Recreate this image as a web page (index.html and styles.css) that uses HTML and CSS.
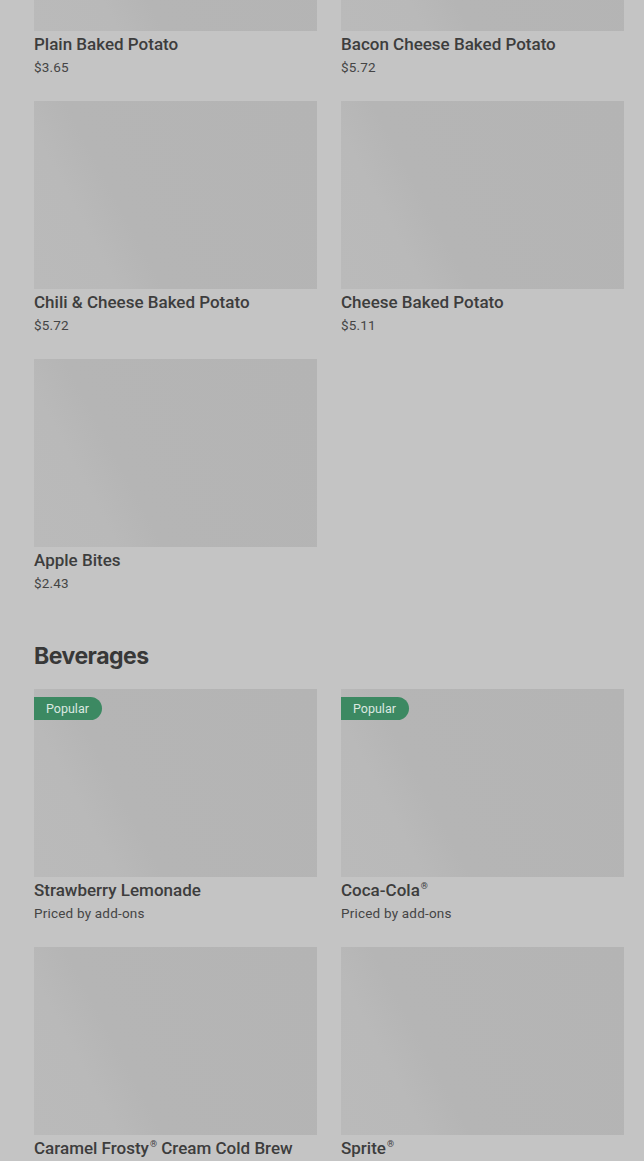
FILE: index.html
```html
<!DOCTYPE html>
<html lang="en">
<head>
    <meta charset="UTF-8">
    <meta name="viewport" content="width=device-width, initial-scale=1.0">
    <title>Menu</title>
    <link rel="stylesheet" href="styles.css">
</head>
<body>
    <div class="menu">
        <section class="category first">
            <div class="grid">
                <div class="item">
                    <div class="thumb"></div>
                    <div class="name">Plain Baked Potato</div>
                    <div class="price">$3.65</div>
                </div>
                <div class="item">
                    <div class="thumb"></div>
                    <div class="name">Bacon Cheese Baked Potato</div>
                    <div class="price">$5.72</div>
                </div>
                <div class="item">
                    <div class="thumb"></div>
                    <div class="name">Chili &amp; Cheese Baked Potato</div>
                    <div class="price">$5.72</div>
                </div>
                <div class="item">
                    <div class="thumb"></div>
                    <div class="name">Cheese Baked Potato</div>
                    <div class="price">$5.11</div>
                </div>
                <div class="item">
                    <div class="thumb"></div>
                    <div class="name">Apple Bites</div>
                    <div class="price">$2.43</div>
                </div>
            </div>
        </section>

        <section class="category">
            <h2>Beverages</h2>
            <div class="grid">
                <div class="item">
                    <div class="thumb"><span class="badge">Popular</span></div>
                    <div class="name">Strawberry Lemonade</div>
                    <div class="price">Priced by add-ons</div>
                </div>
                <div class="item">
                    <div class="thumb"><span class="badge">Popular</span></div>
                    <div class="name">Coca-Cola<sup class="reg">&reg;</sup></div>
                    <div class="price">Priced by add-ons</div>
                </div>
                <div class="item">
                    <div class="thumb"></div>
                    <div class="name">Caramel Frosty<sup class="reg">&reg;</sup> Cream Cold Brew</div>
                </div>
                <div class="item">
                    <div class="thumb"></div>
                    <div class="name">Sprite<sup class="reg">&reg;</sup></div>
                </div>
            </div>
        </section>
    </div>
</body>
</html>
```

FILE: styles.css
```css
html, body {
    margin: 0;
    height: 1161px;
    overflow: hidden;
}
body {
    font-family: Roboto, "Liberation Sans", sans-serif;
    background-color: #c4c4c4;
    color: #3a3a3a;
}
.menu {
    padding: 0 20px 0 34px;
}
.category.first {
    margin-top: -157px;
}
.category h2 {
    margin: 49px 0 19px;
    font-family: Inter, Roboto, sans-serif;
    font-size: 23px;
    line-height: 28px;
    font-weight: 700;
    letter-spacing: -0.5px;
    color: #383838;
}
.grid {
    display: grid;
    grid-template-columns: 1fr 1fr;
    column-gap: 24px;
    row-gap: 24px;
}
.thumb {
    position: relative;
    height: 188px;
    background: linear-gradient(62deg, #bababa 0%, #b9b9b9 22%, #b5b5b5 34%, #b4b4b4 100%);
}
.name {
    margin-top: 2px;
    font-size: 17px;
    line-height: 22px;
    font-weight: 500;
    color: #3d3d3d;
}
.reg {
    font-size: 9px;
    line-height: 0;
    vertical-align: 7px;
    margin-left: 1px;
}
.price {
    margin-top: 2px;
    font-size: 13.5px;
    line-height: 20px;
    letter-spacing: 0.2px;
    color: #454545;
}
.badge {
    position: absolute;
    top: 8px;
    left: 0;
    padding: 0 13px 0 12px;
    height: 23px;
    line-height: 23px;
    font-size: 12.5px;
    color: #dbe8e0;
    background-color: #3c8962;
    border-radius: 0 12px 12px 0;
}
```
